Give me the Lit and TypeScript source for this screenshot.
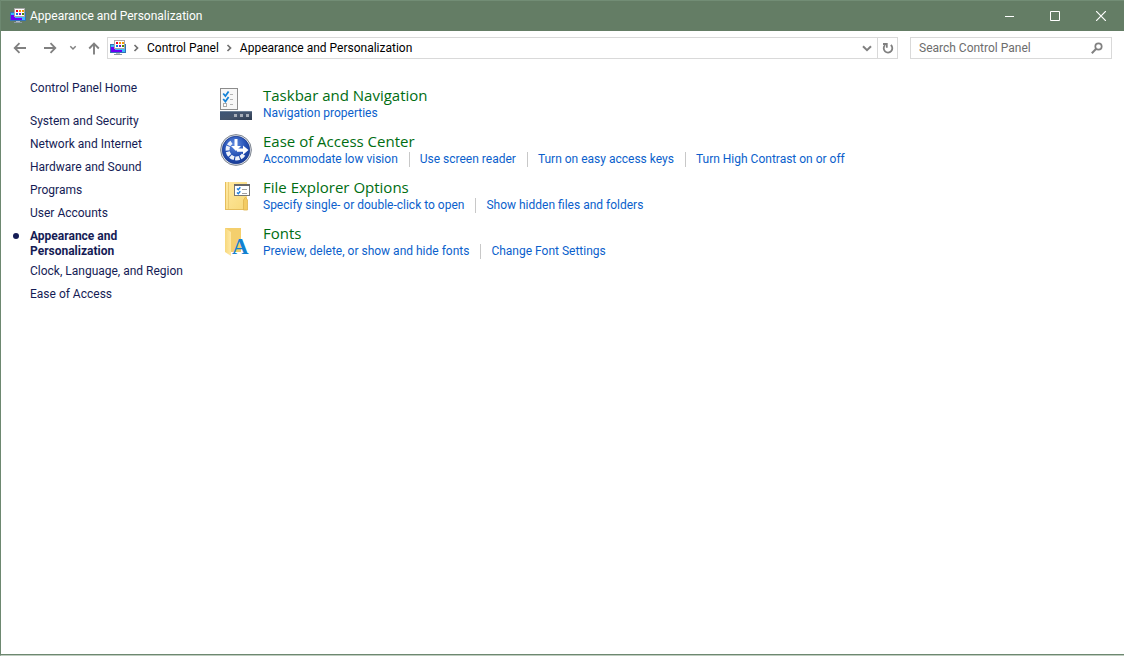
import { LitElement, html, css, svg } from "lit";
import { customElement, property } from "lit/decorators.js";

interface Category {
  icon: string;
  title: string;
  tasks: string[];
}

const CATEGORIES: Category[] = [
  { icon: "taskbar", title: "Taskbar and Navigation", tasks: ["Navigation properties"] },
  {
    icon: "access",
    title: "Ease of Access Center",
    tasks: ["Accommodate low vision", "Use screen reader", "Turn on easy access keys", "Turn High Contrast on or off"],
  },
  {
    icon: "explorer",
    title: "File Explorer Options",
    tasks: ["Specify single- or double-click to open", "Show hidden files and folders"],
  },
  { icon: "fonts", title: "Fonts", tasks: ["Preview, delete, or show and hide fonts", "Change Font Settings"] },
];

const SECTIONS = [
  "System and Security",
  "Network and Internet",
  "Hardware and Sound",
  "Programs",
  "User Accounts",
  "Appearance and Personalization",
  "Clock, Language, and Region",
  "Ease of Access",
];
const CURRENT = "Appearance and Personalization";

const ICONS: Record<string, unknown> = {
  taskbar: svg`
    <defs>
      <linearGradient id="bar" x1="0" y1="0" x2="1" y2="1">
        <stop offset="0" stop-color="#3d5578" /><stop offset=".55" stop-color="#44546c" /><stop offset="1" stop-color="#2c3a50" />
      </linearGradient>
    </defs>
    <rect x=".5" y=".5" width="17" height="21" fill="#f7f7f7" stroke="#8c8c8c" />
    <path d="M3.200 5.500l2.200 2.500 3.200-4.500M3.200 11l2.200 2.500 3.200-4.500" fill="none" stroke="#1583d8" stroke-width="1.800" />
    <rect x="3.500" y="15.500" width="3" height="3" fill="#fff" stroke="#aaa" />
    <path d="M10 6.500h3M10 11.500h3M10 16.500h3" stroke="#b4b4b4" />
    <rect y="23" width="32" height="9" fill="url(#bar)" />
    <path d="M0 23.500h32" stroke="#6d8097" />
    <path d="M14 26h3v3h-3zM20 26h3v3h-3zM26 26h3v3h-3z" fill="#a6adb8" />`,
  access: svg`
    <defs>
      <radialGradient id="ball" cx=".45" cy=".3" r=".75">
        <stop offset="0" stop-color="#5f8ae0" /><stop offset=".55" stop-color="#2450b4" /><stop offset="1" stop-color="#173a94" />
      </radialGradient>
    </defs>
    <circle cx="16" cy="16" r="15.400" fill="#dfe3ea" stroke="#7f8691" stroke-width="1" />
    <circle cx="16" cy="16" r="13.700" fill="url(#ball)" stroke="#1b3a8e" stroke-width=".8" />
    <path d="M11.500 8.300A8.800 8.800 0 1 0 24 20" fill="none" stroke="#eef2fa" stroke-width="4" stroke-dasharray="4.200 1.100" />
    <path d="M14.500 5h3v7h3.500l-5 5-5-5h3.500z" fill="#fff" />
    <path d="M17 14.500h6v-3l5.500 4.600-5.500 4.600v-3h-6z" fill="#fff" />`,
  explorer: svg`
    <defs>
      <linearGradient id="folder" x1="0" y1="0" x2="1" y2="1">
        <stop offset="0" stop-color="#ffe9a2" /><stop offset="1" stop-color="#f7d878" />
      </linearGradient>
    </defs>
    <path d="M5 2h22v28H5z" fill="url(#folder)" />
    <path d="M5.500 2v28M5 29.500h22" stroke="#e5bd5c" />
    <path d="M8.500 2v27" stroke="#edcc74" />
    <path d="M23.500 30V20l2-3 2 3v10z" fill="#f3cb62" stroke="#e0b44c" stroke-width=".8" />
    <rect x="14.500" y="4.500" width="15" height="11" fill="#fff" stroke="#777" />
    <path d="M14 5h16" stroke="#686868" stroke-width="2" />
    <path d="M17 8.500l1.300 1.300 2-2.600M17 12.500l1.300 1.300 2-2.600" fill="none" stroke="#1c7edb" stroke-width="1.400" />
    <path d="M22 9.500h5M22 13.500h5" stroke="#a0a0a0" />`,
  fonts: svg`
    <defs>
      <linearGradient id="leaf" x1="0" y1="0" x2="1" y2="0">
        <stop offset="0" stop-color="#f7d87c" /><stop offset="1" stop-color="#ffe9a6" />
      </linearGradient>
    </defs>
    <path d="M5 2h16v24H9z" fill="#f4cf6d" />
    <path d="M5 2l6 4v24l-6-4z" fill="url(#leaf)" />
    <text x="12" y="28" font-family="Liberation Serif, serif" font-size="23" font-weight="700" fill="#1281d0">A</text>`,
  panel: svg`
    <path d="M0 4h16v9H0z" fill="#3572b5" />
    <path d="M1 5h14v7H1z" fill="#3db8ff" />
    <path d="M1 7h4v3h7v2H1z" fill="#6a00f4" />
    <path d="M6 13h4v1H6z" fill="#b5bcc2" /><path d="M4 14h8v1H4z" fill="#8f9aa5" />
    <rect x="4.500" y=".5" width="10" height="8" fill="#fff" stroke="#a9a9a9" />
    <path d="M6 2h2v2H6z" fill="#f00020" /><path d="M9 2h2v2H9zM12 2h2v2h-2z" fill="#ff9500" />
    <path d="M6 5h2v2H6z" fill="#0a7be0" /><path d="M9 5h2v2H9z" fill="#7a18d0" /><path d="M12 5h2v2h-2z" fill="#4c8a00" />`,
};

@customElement("cp-icon")
export class CpIcon extends LitElement {
  @property() name = "panel";
  @property({ type: Number }) size = 16;
  static styles = css`
    :host { display: block; flex: none; }
    svg { display: block; }
  `;
  render() {
    return html`<svg width=${this.size} height=${this.size} viewBox="0 0 ${this.size} ${this.size}" aria-hidden="true">${ICONS[this.name]}</svg>`;
  }
}

@customElement("app-root")
export class AppRoot extends LitElement {
  static styles = css`
    :host {
      display: flex;
      flex-direction: column;
      box-sizing: border-box;
      min-height: 100vh;
      border-left: 1px solid #6d8870;
      border-bottom: 1px solid #c0cdc1;
      box-shadow: inset 0 -1px #6d8870;
      background: #fff;
      color: #000;
      font: 12px/15px "Segoe UI", Roboto, "Open Sans", sans-serif;
    }
    * { box-sizing: border-box; }
    a { color: inherit; text-decoration: none; }
    a:hover { text-decoration: underline; }
    button {
      display: flex;
      align-items: center;
      justify-content: center;
      padding: 0;
      border: 0;
      background: none;
      color: #808080;
      font: inherit;
    }
    svg { display: block; flex: none; }
    .titlebar {
      display: flex;
      align-items: center;
      height: 31px;
      padding-left: 9px;
      border-top: 1px solid #728d75;
      background: #647d65;
      color: #fff;
    }
    .caption { flex: 1; margin: 0 0 0 4px; font-size: 12px; font-weight: 400; }
    .window-button { width: 46px; height: 30px; color: #fff; }
    .toolbar { display: flex; align-items: center; padding: 6px 12px 0 8px; }
    .nav { display: flex; align-items: center; }
    .nav button { width: 22px; height: 22px; }
    .nav .forward { margin-left: 8px; }
    .nav .recent { width: 24px; }
    .nav .up { width: 18px; margin-right: 4px; }
    .address {
      display: flex;
      flex: 1;
      align-items: center;
      height: 22px;
      border: 1px solid #d9d9d9;
    }
    .address cp-icon { margin: 0 0 0 2px; }
    .crumbs { display: flex; flex: 1; align-items: center; margin: 0; padding: 0; list-style: none; }
    .crumbs li { display: flex; align-items: center; }
    .crumbs svg { width: 21px; color: #707070; }
    .address button { width: 20px; height: 20px; }
    .address .refresh { border-left: 1px solid #d9d9d9; }
    .search {
      display: flex;
      align-items: center;
      width: 202px;
      height: 22px;
      margin-left: 12px;
      border: 1px solid #d9d9d9;
    }
    .search input {
      flex: 1;
      min-width: 0;
      padding: 0 0 0 8px;
      border: 0;
      outline: 0;
      background: none;
      font: inherit;
    }
    .search input::placeholder { color: #6d6d6d; opacity: 1; }
    .search button { width: 28px; height: 20px; }
    .content { display: flex; flex: 1; padding-top: 22px; }
    .sidebar { flex: none; width: 219px; padding-left: 29px; color: #151c55; }
    .sidebar a { display: block; }
    .sections { display: grid; gap: 8px; margin: 18px 0 0; padding: 0; list-style: none; }
    .current { position: relative; width: 120px; margin-bottom: -3px; font-weight: 700; }
    .current::before {
      content: "";
      position: absolute;
      top: 4px;
      left: -17px;
      width: 6px;
      height: 6px;
      border-radius: 50%;
      background: #151c55;
    }
    .categories { display: grid; flex: 1; align-content: start; gap: 8px; padding-top: 4px; }
    .category { display: flex; gap: 11px; min-height: 38px; }
    .category cp-icon { margin-top: 3px; }
    .category h2 { margin: 0; color: #006d12; font: 400 15px/20px "Segoe UI", "Open Sans", sans-serif; }
    .tasks { display: flex; flex-wrap: wrap; margin: 1px 0 0; padding: 0; color: #0b5fcc; list-style: none; }
    .tasks li + li { margin-left: 11px; padding-left: 10px; border-left: 1px solid #c8c8c8; }
  `;

  private chevron() {
    return html`<svg width="8" height="10" viewBox="0 0 8 10" fill="none" stroke="currentColor" stroke-width="1.7"><path d="M2 2l3 3-3 3" /></svg>`;
  }

  render() {
    return html`
      <header class="titlebar">
        <cp-icon name="panel"></cp-icon>
        <h1 class="caption">Appearance and Personalization</h1>
        <button class="window-button" aria-label="Minimize">
          <svg width="10" height="10" stroke="currentColor"><path d="M1 5.500h10" /></svg>
        </button>
        <button class="window-button" aria-label="Maximize">
          <svg width="10" height="10" fill="none" stroke="currentColor"><path d="M.5.5h9v9h-9z" /></svg>
        </button>
        <button class="window-button" aria-label="Close">
          <svg width="10" height="10" stroke="currentColor" stroke-width="1.2"><path d="M0 0l10 10M10 0L0 10" /></svg>
        </button>
      </header>
      <div class="toolbar">
        <nav class="nav" aria-label="History">
          <button aria-label="Back">
            <svg width="14" height="12" fill="none" stroke="currentColor" stroke-width="1.8"><path d="M13 6H2M6.500 1.200L1.700 6l4.800 4.800" /></svg>
          </button>
          <button class="forward" aria-label="Forward">
            <svg width="14" height="12" fill="none" stroke="currentColor" stroke-width="1.8"><path d="M1 6h11M7.500 1.200L12.300 6l-4.800 4.800" /></svg>
          </button>
          <button class="recent" aria-label="Recent locations">
            <svg width="8" height="6" fill="none" stroke="currentColor" stroke-width="1.500"><path d="M1.300 1.300L4 4l2.700-2.700" /></svg>
          </button>
          <button class="up" aria-label="Up">
            <svg width="12" height="13" fill="none" stroke="currentColor" stroke-width="1.900"><path d="M6 12.500V2M1.200 6.500L6 1.700l4.800 4.800" /></svg>
          </button>
        </nav>
        <div class="address">
          <cp-icon name="panel"></cp-icon>
          <ol class="crumbs">
            <li>${this.chevron()}<a href="#panel">Control Panel</a></li>
            <li>${this.chevron()}<a href="#appearance">Appearance and Personalization</a></li>
          </ol>
          <button aria-label="Previous locations">
            <svg width="10" height="7" fill="none" stroke="currentColor" stroke-width="2"><path d="M1 1.200l4 4 4-4" /></svg>
          </button>
          <button class="refresh" aria-label="Refresh">
            <svg width="12" height="12" fill="none" stroke="currentColor" stroke-width="1.800"><path d="M8.800 3A4.300 4.300 0 1 1 3 3.200M1 2h3.800v3.800" /></svg>
          </button>
        </div>
        <div class="search">
          <input type="search" aria-label="Search Control Panel" placeholder="Search Control Panel" />
          <button aria-label="Search">
            <svg width="12" height="12" fill="none" stroke="currentColor" stroke-width="1.700"><circle cx="7.500" cy="4.500" r="3.200" /><path d="M5.200 6.800L.8 11.200" stroke-width="2" /></svg>
          </button>
        </div>
      </div>
      <div class="content">
        <nav class="sidebar" aria-label="Control Panel sections">
          <a href="#home">Control Panel Home</a>
          <ul class="sections">
            ${SECTIONS.map((s) => html`<li class=${s === CURRENT ? "current" : ""}><a href="#section">${s}</a></li>`)}
          </ul>
        </nav>
        <main class="categories">
          ${CATEGORIES.map(
            (c) => html`<section class="category">
              <cp-icon name=${c.icon} .size=${32}></cp-icon>
              <div>
                <h2><a href="#category">${c.title}</a></h2>
                <ul class="tasks">${c.tasks.map((t) => html`<li><a href="#task">${t}</a></li>`)}</ul>
              </div>
            </section>`
          )}
        </main>
      </div>
    `;
  }
}
